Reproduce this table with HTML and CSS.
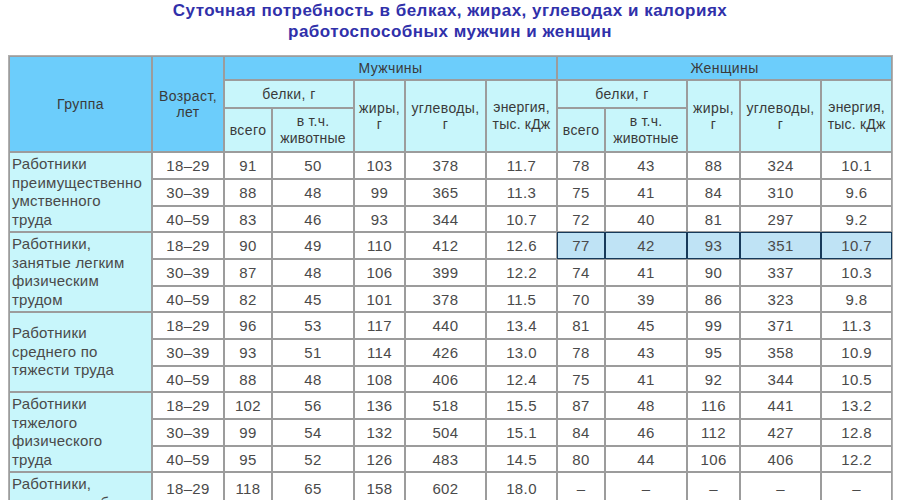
FILE: index.html
```html
<!DOCTYPE html>
<html lang="ru">
<head>
<meta charset="utf-8">
<title>Суточная потребность</title>
<link rel="stylesheet" href="styles.css">
</head>
<body>
<h1 class="title">Суточная потребность в белках, жирах, углеводах и калориях<br>работоспособных мужчин и женщин</h1>
<table class="norms">
  <colgroup>
    <col class="c-group"><col class="c-age">
    <col class="c-all"><col class="c-anim"><col class="c-fat"><col class="c-carb"><col class="c-en">
    <col class="c-all"><col class="c-anim"><col class="c-fat2"><col class="c-carb"><col class="c-en">
  </colgroup>
  <thead>
    <tr class="h1">
      <th rowspan="3" class="top">Группа</th>
      <th rowspan="3" class="top">Возраст,<br>лет</th>
      <th colspan="5" class="top">Мужчины</th>
      <th colspan="5" class="top">Женщины</th>
    </tr>
    <tr class="h2">
      <th colspan="2">белки, г</th>
      <th rowspan="2">жиры,<br>г</th>
      <th rowspan="2">углеводы,<br>г</th>
      <th rowspan="2" class="sm">энергия,<br>тыс. кДж</th>
      <th colspan="2">белки, г</th>
      <th rowspan="2">жиры,<br>г</th>
      <th rowspan="2">углеводы,<br>г</th>
      <th rowspan="2" class="sm">энергия,<br>тыс. кДж</th>
    </tr>
    <tr class="h3">
      <th>всего</th>
      <th class="sm">в т.ч.<br>животные</th>
      <th>всего</th>
      <th class="sm">в т.ч.<br>животные</th>
    </tr>
  </thead>
  <tbody>
    <tr class="ra">
      <td rowspan="3" class="grp">Работники<br>преимущественно<br>умственного<br>труда</td>
      <td>18–29</td><td>91</td><td>50</td><td>103</td><td>378</td><td>11.7</td>
      <td>78</td><td>43</td><td>88</td><td>324</td><td>10.1</td>
    </tr>
    <tr class="ra">
      <td>30–39</td><td>88</td><td>48</td><td>99</td><td>365</td><td>11.3</td>
      <td>75</td><td>41</td><td>84</td><td>310</td><td>9.6</td>
    </tr>
    <tr class="rb">
      <td>40–59</td><td>83</td><td>46</td><td>93</td><td>344</td><td>10.7</td>
      <td>72</td><td>40</td><td>81</td><td>297</td><td>9.2</td>
    </tr>
    <tr class="ra">
      <td rowspan="3" class="grp">Работники,<br>занятые легким<br>физическим<br>трудом</td>
      <td>18–29</td><td>90</td><td>49</td><td>110</td><td>412</td><td>12.6</td>
      <td class="hl">77</td><td class="hl">42</td><td class="hl">93</td><td class="hl">351</td><td class="hl">10.7</td>
    </tr>
    <tr class="ra">
      <td>30–39</td><td>87</td><td>48</td><td>106</td><td>399</td><td>12.2</td>
      <td>74</td><td>41</td><td>90</td><td>337</td><td>10.3</td>
    </tr>
    <tr class="rb">
      <td>40–59</td><td>82</td><td>45</td><td>101</td><td>378</td><td>11.5</td>
      <td>70</td><td>39</td><td>86</td><td>323</td><td>9.8</td>
    </tr>
    <tr class="ra">
      <td rowspan="3" class="grp">Работники<br>среднего по<br>тяжести труда</td>
      <td>18–29</td><td>96</td><td>53</td><td>117</td><td>440</td><td>13.4</td>
      <td>81</td><td>45</td><td>99</td><td>371</td><td>11.3</td>
    </tr>
    <tr class="ra">
      <td>30–39</td><td>93</td><td>51</td><td>114</td><td>426</td><td>13.0</td>
      <td>78</td><td>43</td><td>95</td><td>358</td><td>10.9</td>
    </tr>
    <tr class="rb">
      <td>40–59</td><td>88</td><td>48</td><td>108</td><td>406</td><td>12.4</td>
      <td>75</td><td>41</td><td>92</td><td>344</td><td>10.5</td>
    </tr>
    <tr class="ra">
      <td rowspan="3" class="grp">Работники<br>тяжелого<br>физического<br>труда</td>
      <td>18–29</td><td>102</td><td>56</td><td>136</td><td>518</td><td>15.5</td>
      <td>87</td><td>48</td><td>116</td><td>441</td><td>13.2</td>
    </tr>
    <tr class="ra">
      <td>30–39</td><td>99</td><td>54</td><td>132</td><td>504</td><td>15.1</td>
      <td>84</td><td>46</td><td>112</td><td>427</td><td>12.8</td>
    </tr>
    <tr class="rb">
      <td>40–59</td><td>95</td><td>52</td><td>126</td><td>483</td><td>14.5</td>
      <td>80</td><td>44</td><td>106</td><td>406</td><td>12.2</td>
    </tr>
    <tr class="ra">
      <td rowspan="3" class="grp grp-top">Работники,<br>занятые особо<br>тяжелым<br>физическим<br>трудом</td>
      <td>18–29</td><td>118</td><td>65</td><td>158</td><td>602</td><td>18.0</td>
      <td>–</td><td>–</td><td>–</td><td>–</td><td>–</td>
    </tr>
    <tr class="ra">
      <td>30–39</td><td>113</td><td>62</td><td>150</td><td>574</td><td>17.2</td>
      <td>–</td><td>–</td><td>–</td><td>–</td><td>–</td>
    </tr>
    <tr class="rb">
      <td>40–59</td><td>108</td><td>59</td><td>143</td><td>546</td><td>16.4</td>
      <td>–</td><td>–</td><td>–</td><td>–</td><td>–</td>
    </tr>
  </tbody>
</table>
</body>
</html>
```
FILE: styles.css
```css
html, body {
  margin: 0;
  padding: 0;
  background: #ffffff;
}
body {
  padding: 0 0 0 8px;
  font-family: "Liberation Sans", Arial, sans-serif;
  color: #444;
}
.title {
  margin: 0 0 13px -8px;
  width: 900px;
  text-align: center;
  font-size: 17px;
  line-height: 21px;
  letter-spacing: 0.5px;
  font-weight: bold;
  color: #3030aa;
}
.norms {
  table-layout: fixed;
  width: 885px;
  border-collapse: separate;
  border-spacing: 0;
  border: 1px solid #b0b0b0;
  font-size: 15px;
}
.c-group { width: 143px; }
.c-age { width: 72px; }
.c-all { width: 48px; }
.c-anim { width: 82px; }
.c-fat { width: 51px; }
.c-fat2 { width: 53px; }
.c-carb { width: 81px; }
.c-en { width: 71px; }

.norms th,
.norms td {
  border: 1px solid #9c9c9c;
  padding: 0;
  text-align: center;
  vertical-align: middle;
  overflow: hidden;
}
.norms th {
  font-weight: normal;
  font-size: 14px;
  letter-spacing: 0.4px;
  color: #3a3a3a;
  background: #c8f6fb;
  line-height: 16px;
}
.norms th.top {
  background: #6ccdfb;
}
.norms th.sm {
  line-height: 17px;
  letter-spacing: 0.2px;
}
.h1 { height: 24px; }
.h2 { height: 28px; }
.h3 { height: 44px; }
.ra { height: 27px; }
.rb { height: 26px; }

.norms td {
  background: #ffffff;
  color: #4a4a4a;
  letter-spacing: 0.4px;
}
.norms td.grp {
  background: #c8f6fb;
  text-align: left;
  white-space: nowrap;
  padding: 0 0 0 2px;
  line-height: 18.5px;
  letter-spacing: 0.2px;
}
.norms td.grp-top {
  vertical-align: top;
  padding-top: 2px;
}
.norms td.hl {
  background: #bfe3f5;
  border-color: #173a5a;
}
```
